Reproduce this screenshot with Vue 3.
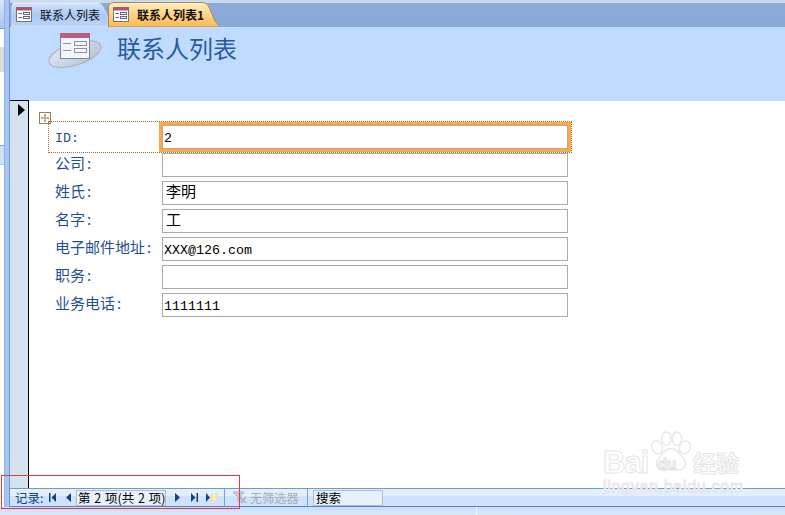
<script setup>
const rows = [
  { name: 'ID', latin: true, value: '2', mono: true, focus: true },
  { name: '公司', value: '' },
  { name: '姓氏', value: '李明' },
  { name: '名字', value: '工' },
  { name: '电子邮件地址', value: 'XXX@126.com', mono: true },
  { name: '职务', value: '' },
  { name: '业务电话', value: '1111111', mono: true },
]
</script>

<template>
  <div class="app">
    <div class="top">
      <aside class="side">
        <div class="panel">
          <div class="p-a"></div>
          <div class="p-b"></div>
          <div class="p-c"></div>
          <div class="p-d"></div>
          <div class="p-e"></div>
          <div class="p-f"></div>
        </div>
        <div class="splitter"></div>
      </aside>

      <main class="main">
        <div class="tabs">
          <div class="tab">
            <svg class="tab-bg" width="100" height="25" viewBox="0 0 100 25">
              <defs>
                <linearGradient id="tabA" x1="0" y1="0" x2="0" y2="1">
                  <stop offset="0" stop-color="#d3e4fb" />
                  <stop offset="0.5" stop-color="#a9c8f3" />
                  <stop offset="1" stop-color="#bcd6fb" />
                </linearGradient>
              </defs>
              <path d="M1 25V5Q1 1 5 1H86Q90 1 92 5L98 18L100 25Z" fill="url(#tabA)" stroke="#fff" stroke-opacity=".6" />
            </svg>
            <svg class="mini" width="16" height="16" viewBox="0 0 16 16">
              <rect x=".5" y=".5" width="15" height="14" fill="#fff" stroke="#6f7686" />
              <rect x=".5" y=".5" width="15" height="3" fill="#b9506f" />
              <path d="M2.500 6.500H6M2.500 10.500H6" stroke="#667" />
              <rect x="7.500" y="5.500" width="6" height="2" fill="none" stroke="#667" />
              <rect x="7.500" y="9.500" width="6" height="2" fill="none" stroke="#667" />
            </svg>
            <span class="tab-text">联系人列表</span>
          </div>
          <div class="tab active">
            <svg class="tab-bg" width="114" height="25" viewBox="0 0 114 25">
              <defs>
                <linearGradient id="tabB" x1="0" y1="0" x2="0" y2="1">
                  <stop offset="0" stop-color="#ffedc0" />
                  <stop offset="0.45" stop-color="#ffd68a" />
                  <stop offset="1" stop-color="#ffb850" />
                </linearGradient>
              </defs>
              <path d="M.5 25V6Q.5 .5 6 .5H95Q99 .5 101 5L107 19L112 25Z" fill="url(#tabB)" stroke="#a98a56" />
            </svg>
            <svg class="mini" width="16" height="16" viewBox="0 0 16 16">
              <rect x=".5" y=".5" width="15" height="14" fill="#fff" stroke="#6f7686" />
              <rect x=".5" y=".5" width="15" height="3" fill="#b9506f" />
              <path d="M2.500 6.500H6M2.500 10.500H6" stroke="#667" />
              <rect x="7.500" y="5.500" width="6" height="2" fill="none" stroke="#667" />
              <rect x="7.500" y="9.500" width="6" height="2" fill="none" stroke="#667" />
            </svg>
            <span class="tab-text bold">联系人列表1</span>
          </div>
        </div>

        <header class="head">
          <svg class="logo" width="56" height="38" viewBox="0 0 56 38">
            <defs>
              <linearGradient id="ell" x1="0" y1="0" x2="1" y2="1">
                <stop offset="0" stop-color="#dfe8f5" />
                <stop offset="1" stop-color="#b7c3d3" />
              </linearGradient>
            </defs>
            <ellipse cx="27" cy="21" rx="27" ry="11" transform="rotate(-18 27 21)" fill="url(#ell)" stroke="#a5b1c2" />
            <rect x="12.500" y=".5" width="29" height="25" fill="#f4f5f9" stroke="#7f8695" />
            <rect x="12" y="0" width="30" height="5" fill="#bb5e7e" />
            <path d="M15 10.500H23M15 17.500H23" stroke="#8a93a5" />
            <rect x="26.500" y="8.500" width="12" height="4" fill="none" stroke="#8a93a5" />
            <rect x="26.500" y="15.500" width="12" height="4" fill="none" stroke="#8a93a5" />
          </svg>
          <h1 class="title">联系人列表</h1>
        </header>

        <section class="body">
          <div class="selector">
            <span class="pointer"></span>
          </div>
          <div class="form">
            <span class="move">
              <svg width="10" height="10" viewBox="0 0 10 10">
                <path d="M5 1V9M1 5H9M4 2H6M4 8H6M2 4V6M8 4V6" stroke="#8f7652" stroke-width=".8" fill="none" />
              </svg>
            </span>
            <div v-for="row in rows" :key="row.name" class="row">
              <span v-if="row.focus" class="dotted"></span>
              <label class="label" :class="{ latin: row.latin }">{{ row.name }}<span class="colon">:</span></label>
              <div class="field" :class="{ focus: row.focus, mono: row.mono }">{{ row.value }}</div>
            </div>
          </div>
        </section>

        <footer class="nav">
          <span class="rec">记录:</span>
          <svg class="ic first" width="7" height="9" viewBox="0 0 7 9"><path d="M0 0H1.500V9H0ZM7 0V9L2.500 4.500Z" fill="#15428b" /></svg>
          <svg class="ic prev" width="5" height="9" viewBox="0 0 5 9"><path d="M5 0V9L0 4.500Z" fill="#15428b" /></svg>
          <div class="counter">第 2 项(共 2 项)</div>
          <svg class="ic next" width="5" height="9" viewBox="0 0 5 9"><path d="M0 0V9L5 4.500Z" fill="#15428b" /></svg>
          <svg class="ic last" width="7" height="9" viewBox="0 0 7 9"><path d="M0 0V9L4.500 4.500ZM5.500 0H7V9H5.500Z" fill="#15428b" /></svg>
          <svg class="ic new" width="11" height="9" viewBox="0 0 11 9">
            <path d="M0 0V9L4 4.500Z" fill="#15428b" />
            <path d="M5 1H11V8H5Z" fill="#f4d35e" />
            <path d="M5 3H11M5 6H11M7 1V8M9 1V8" stroke="#fff6c8" />
          </svg>
          <span class="sep sep-a"></span>
          <svg class="filter" width="15" height="13" viewBox="0 0 15 13">
            <path d="M1 1H12L8 6V11L6 10V6Z" fill="#c4cedd" stroke="#a9b1bd" />
            <path d="M8 6L14 12M14 6L9 12" stroke="#a9b1bd" stroke-width="1.500" />
          </svg>
          <span class="nofilter">无筛选器</span>
          <span class="sep sep-b"></span>
          <div class="search">搜索</div>
        </footer>
      </main>
    </div>

    <div class="status">
      <span class="status-sep"></span>
    </div>

    <div class="mark" aria-hidden="true">
      <svg class="paw" width="44" height="44" viewBox="0 0 66 62">
        <g fill="#fff" stroke="#e6e6e6" stroke-width="2">
          <ellipse cx="12" cy="24" rx="8" ry="10" transform="rotate(-25 12 24)" />
          <ellipse cx="26" cy="11" rx="7" ry="10" />
          <ellipse cx="42" cy="11" rx="7" ry="10" />
          <ellipse cx="54" cy="24" rx="8" ry="10" transform="rotate(25 54 24)" />
          <path d="M33 26C44 26 47 36 52 41C58 48 53 60 42 58C36 57 30 57 24 58C13 60 8 48 14 41C19 36 22 26 33 26Z" />
        </g>
      </svg>
      <span class="wm bai">Bai</span>
      <span class="wm du">du</span>
      <span class="wm jy">经验</span>
      <span class="wm url">jingyan.baidu.com</span>
    </div>

    <div class="red"></div>
  </div>
</template>

<style scoped>
.app {
  position: relative;
  width: 785px;
  height: 515px;
  overflow: hidden;
  display: flex;
  flex-direction: column;
  background: #fff;
  font-family: "Noto Sans CJK SC", "Liberation Sans", sans-serif;
}
.top {
  flex: 1;
  min-height: 0;
  display: flex;
}
.side {
  width: 10px;
  flex: none;
  display: flex;
}
.panel {
  width: 4px;
  display: flex;
  flex-direction: column;
  background: #fff;
}
.p-a {
  height: 28px;
  background: linear-gradient(#d9e7fb, #a9c8f0);
  border-bottom: 1px solid #7fa3d8;
}
.p-b { height: 18px; background: #fff; }
.p-c { height: 25px; background: #dcdcdc; }
.p-d {
  height: 73px;
  background: #fff;
  border-bottom: 1px solid #7fa3d8;
}
.p-e { height: 18px; background: #cfe0f8; border-bottom: 1px solid #a9c4ea; }
.p-f { flex: 1; background: #fff; }
.splitter {
  width: 6px;
  background: #a7c5f2;
  border-left: 1px solid #8fb2e6;
  border-right: 1px solid #6f96cf;
  box-sizing: border-box;
}
.main {
  flex: 1;
  min-width: 0;
  display: flex;
  flex-direction: column;
}
.tabs {
  height: 27px;
  flex: none;
  box-sizing: border-box;
  padding: 3px 0 0 1px;
  display: flex;
  align-items: flex-end;
  background: linear-gradient(#c9d9ee 0, #c9d9ee 3px, #8baad6 3px, #8aa9d5 100%);
}
.tab {
  position: relative;
  width: 97px;
  height: 24px;
  flex: none;
  display: flex;
  align-items: center;
  padding-left: 5px;
  box-sizing: border-box;
}
.tab.active {
  width: 110px;
}
.tab-bg {
  position: absolute;
  left: 0;
  bottom: 0;
}
.mini {
  position: relative;
  flex: none;
}
.tab-text {
  position: relative;
  margin-left: 8px;
  font-size: 12px;
  line-height: 14px;
  color: #111;
  white-space: nowrap;
}
.bold {
  font-weight: 700;
}
.head {
  height: 74px;
  flex: none;
  box-sizing: border-box;
  background: #bfdbff;
  display: flex;
  align-items: flex-start;
  padding: 6px 0 0 38px;
}
.logo {
  flex: none;
}
.title {
  margin: -1px 0 0 13px;
  font-size: 24px;
  line-height: 32px;
  font-weight: 400;
  color: #2a5a9c;
  white-space: nowrap;
}
.body {
  flex: 1;
  min-height: 0;
  display: flex;
  background: #fff;
}
.selector {
  width: 19px;
  flex: none;
  box-sizing: border-box;
  background: #d5e3f1;
  border-top: 1px solid #000;
  border-right: 1px solid #000;
  margin-top: -1px;
  padding: 3px 0 0 8px;
}
.pointer {
  display: block;
  width: 0;
  height: 0;
  border-style: solid;
  border-width: 6px 0 6px 7px;
  border-color: transparent transparent transparent #000;
}
.form {
  position: relative;
  flex: 1;
  padding: 24px 0 0 26px;
}
.move {
  position: absolute;
  left: 10px;
  top: 11px;
  width: 12px;
  height: 12px;
  box-sizing: border-box;
  border: 1px solid #9a7f58;
  background: #fff;
  display: flex;
  align-items: center;
  justify-content: center;
}
.row {
  position: relative;
  display: flex;
  align-items: center;
  height: 28px;
}
.dotted {
  position: absolute;
  left: -7px;
  top: -4px;
  width: 524px;
  height: 32px;
  box-sizing: border-box;
  border: 1px dotted #a0722a;
}
.label {
  width: 107px;
  flex: none;
  margin-top: -8px;
  font-size: 15px;
  line-height: 24px;
  color: #1f4f8f;
  white-space: nowrap;
}
.label.latin {
  margin-top: 0;
  font-family: "Liberation Mono", monospace;
  font-size: 13.330px;
}
.colon {
  margin-left: 2px;
}
.latin .colon {
  margin-left: 0;
}
.field {
  position: relative;
  width: 406px;
  height: 24px;
  margin-top: -4px;
  box-sizing: border-box;
  border: 1px solid #aaa;
  padding-left: 3px;
  background: #fff;
  font-size: 15px;
  line-height: 18px;
  color: #000;
}
.field.mono {
  padding-left: 1px;
  font-family: "Liberation Mono", monospace;
  font-size: 13.330px;
  line-height: 25px;
}
.field.focus {
  box-shadow: 0 0 0 3px #ffa83f;
}
.nav {
  height: 19px;
  flex: none;
  box-sizing: border-box;
  display: flex;
  align-items: center;
  border-top: 1px solid #6f9ad6;
  border-bottom: 1px solid #5c85bf;
  background: linear-gradient(#e3eeff 0, #e3eeff 44%, #d0e2fb 44%, #d0e2fb 100%);
  padding-left: 5px;
}
.rec {
  width: 34px;
  flex: none;
  margin-top: -1px;
  font-size: 12.500px;
  line-height: 15px;
  color: #15428b;
  white-space: nowrap;
}
.ic {
  flex: none;
}
.prev { margin-left: 10px; }
.counter {
  width: 90px;
  height: 16px;
  flex: none;
  margin-left: 5px;
  box-sizing: border-box;
  border: 1px solid #adbdd2;
  background: #eaf1fb;
  font-size: 12.500px;
  line-height: 14px;
  word-spacing: 1px;
  color: #000;
  white-space: pre;
  padding-left: 1px;
}
.next { margin-left: 9px; }
.last { margin-left: 11px; }
.new { margin-left: 8px; }
.sep {
  width: 1px;
  height: 17px;
  flex: none;
  background: #7ba1d6;
}
.sep-a { margin-left: 7px; }
.filter {
  flex: none;
  margin-left: 7px;
}
.nofilter {
  width: 49px;
  flex: none;
  margin-left: 3px;
  font-size: 12.200px;
  line-height: 16px;
  color: #a6adb6;
  white-space: nowrap;
}
.sep-b { margin-left: 8px; }
.search {
  width: 70px;
  height: 16px;
  flex: none;
  margin-left: 5px;
  box-sizing: border-box;
  border: 1px solid #adbdd9;
  padding-left: 2px;
  background: #e7f0fd;
  font-size: 12.500px;
  line-height: 14px;
  color: #000;
}
.status {
  height: 8px;
  flex: none;
  position: relative;
  background: linear-gradient(#c8dcf8, #dbe8fb);
}
.status-sep {
  position: absolute;
  left: 476px;
  top: 0;
  bottom: 0;
  width: 1px;
  background: #f2f7ff;
}
.mark {
  position: absolute;
  left: 600px;
  top: 428px;
  width: 150px;
  height: 76px;
}
.paw {
  position: absolute;
  left: 49px;
  top: 2px;
}
.wm {
  position: absolute;
  color: rgba(255, 255, 255, 0.85);
  -webkit-text-stroke: 1px #e6e6e6;
  white-space: nowrap;
  font-family: "Liberation Sans", sans-serif;
  font-weight: 700;
}
.bai {
  left: 3px;
  top: 17px;
  font-size: 31px;
  line-height: 36px;
  letter-spacing: -1px;
}
.du {
  left: 58px;
  top: 27px;
  font-size: 15px;
  line-height: 18px;
  -webkit-text-stroke: 1px #dedede;
}
.jy {
  left: 93px;
  top: 21px;
  font-family: "Noto Sans CJK SC", sans-serif;
  font-size: 23px;
  line-height: 26px;
}
.url {
  left: 3px;
  top: 50px;
  font-size: 16px;
  line-height: 18px;
  font-weight: 400;
  letter-spacing: .7px;
}
.red {
  position: absolute;
  left: 1px;
  top: 475px;
  width: 239px;
  height: 34px;
  box-sizing: border-box;
  border: 1px solid #e8393d;
}
</style>
